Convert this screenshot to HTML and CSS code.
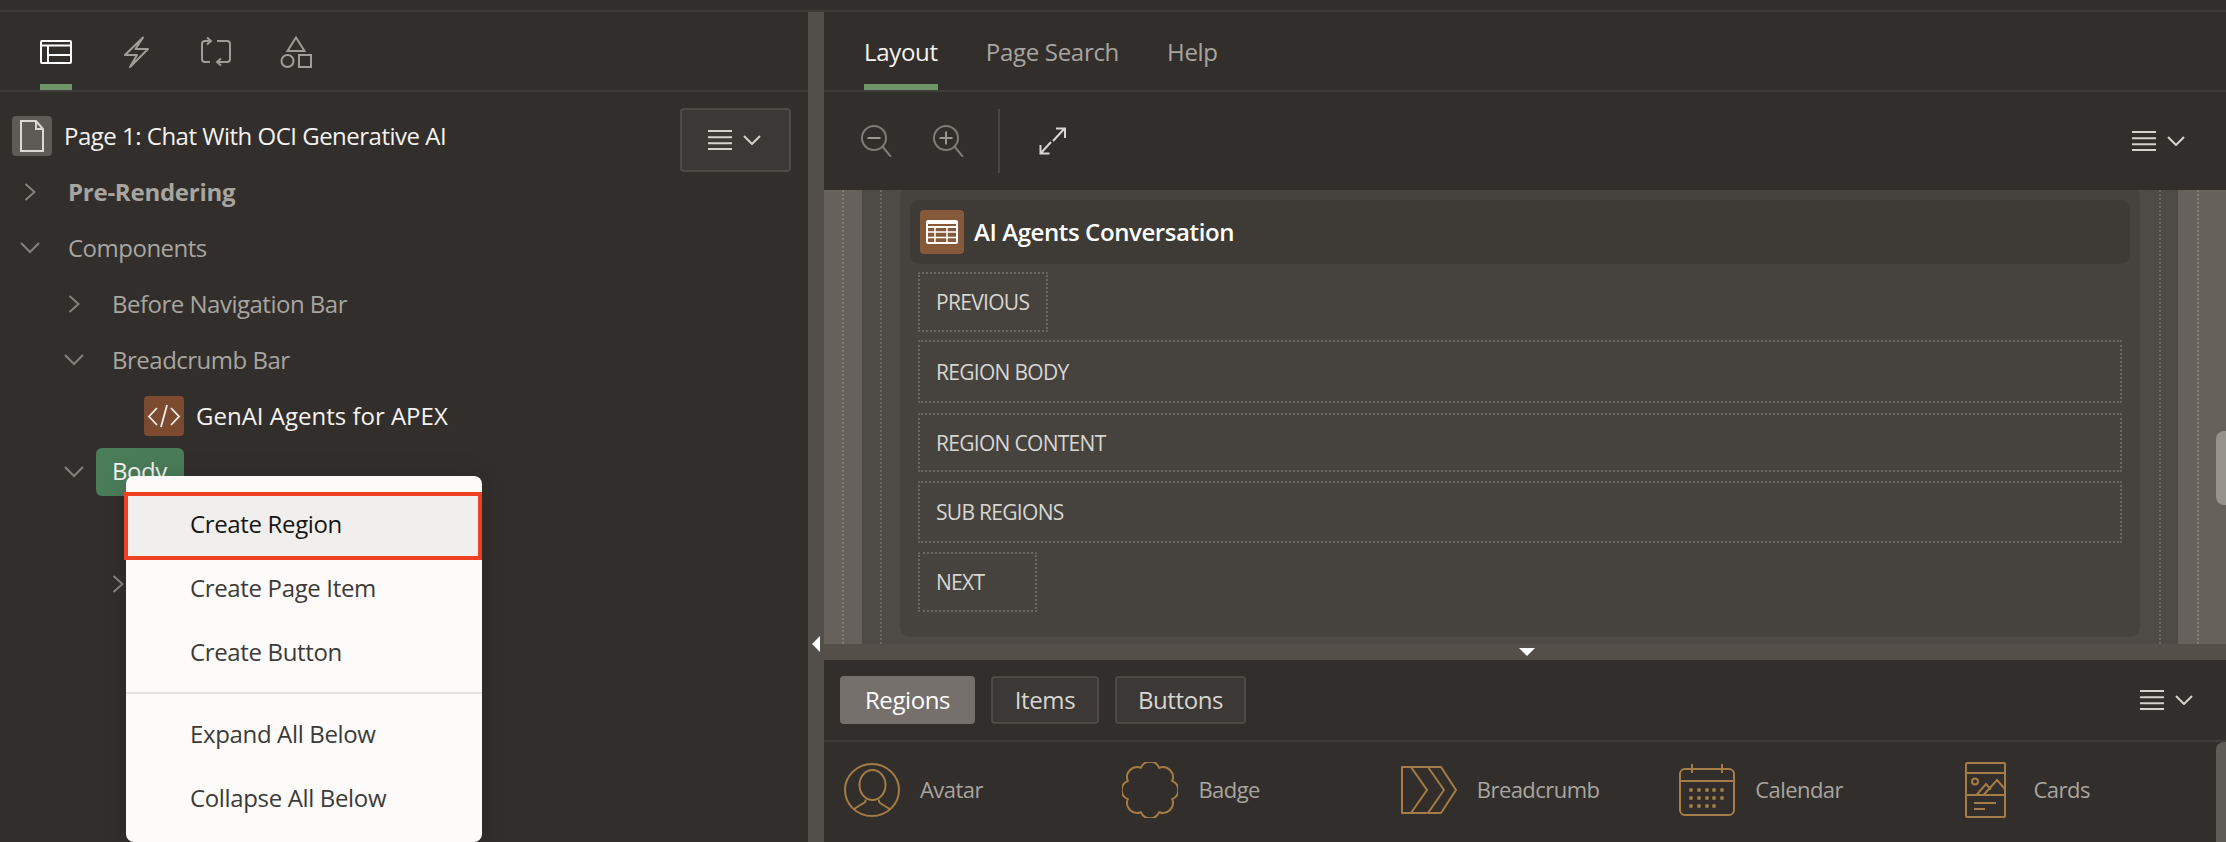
FILE: index.html
```html
<!DOCTYPE html>
<html lang="en">

<head>
    <meta charset="UTF-8">
    <meta name="viewport" content="width=device-width, initial-scale=1.0">
    <title>Page Designer</title>
    <link rel="stylesheet" href="styles.css">
</head>

<body>
    <svg class="sprites" aria-hidden="true">
        <symbol id="i-menu" viewBox="0 0 24 20">
            <path d="M0 1h24M0 7.300h24M0 13.300h24M0 19h24" fill="none" stroke="currentColor" stroke-width="2" />
        </symbol>
        <symbol id="i-caret" viewBox="0 0 18 10">
            <path d="M1 1l8 8 8-8" fill="none" stroke="currentColor" stroke-width="2" />
        </symbol>
        <symbol id="i-right" viewBox="0 0 12 18">
            <path d="M1.500 1l9 8-9 8" fill="none" stroke="currentColor" stroke-width="2" />
        </symbol>
        <symbol id="i-down" viewBox="0 0 20 12">
            <path d="M1 1l9 9 9-9" fill="none" stroke="currentColor" stroke-width="2" />
        </symbol>
    </svg>

    <div class="app">
        <div class="topbar"></div>
        <div class="main">
            <!-- left side: page tree -->
            <section class="tree-panel">
                <div class="icon-tabs">
                    <div class="icon-tab active">
                        <svg width="32" height="24" viewBox="0 0 32 24" fill="none" stroke="currentColor" stroke-width="2">
                            <rect x="1" y="1" width="30" height="22" rx="1" />
                            <path d="M1 5.500h30M8 5.500V23M8 15h23" />
                        </svg>
                    </div>
                    <div class="icon-tab">
                        <svg width="32" height="32" viewBox="0 0 32 32" fill="none" stroke="currentColor" stroke-width="2" stroke-linejoin="round">
                            <path d="M23 1.500L5 19h12l-7 12 18-18H15.500z" />
                        </svg>
                    </div>
                    <div class="icon-tab">
                        <svg width="32" height="32" viewBox="0 0 32 32" fill="none" stroke="currentColor" stroke-width="2">
                            <path d="M11 5H5a3 3 0 0 0-3 3v15a3 3 0 0 0 3 3h5M7 1.500L11 5 7 8.500" />
                            <path d="M17 5h10a3 3 0 0 1 3 3v15a3 3 0 0 1-3 3H17M21 22.500L17 26l4 3.500" />
                        </svg>
                    </div>
                    <div class="icon-tab">
                        <svg width="32" height="32" viewBox="0 0 32 32" fill="none" stroke="currentColor" stroke-width="2">
                            <path d="M16 1.500L24.500 15h-17z" />
                            <circle cx="7.500" cy="25" r="6" />
                            <rect x="19" y="19" width="12" height="12" />
                        </svg>
                    </div>
                </div>

                <div class="tree">
                    <div class="tree-head">
                        <span class="page-icon">
                            <svg width="40" height="40" viewBox="0 0 40 40" fill="none" stroke="#dcd9d4" stroke-width="2">
                                <path d="M9 5h15l7 8v22H9zM24 5v8h7" />
                            </svg>
                        </span>
                        <span class="tree-title">Page 1: Chat With OCI Generative AI</span>
                        <button class="menu-btn">
                            <svg class="i-menu"><use href="#i-menu" /></svg>
                            <svg class="i-caret"><use href="#i-caret" /></svg>
                        </button>
                    </div>

                    <div class="row">
                        <span class="toggle"><svg class="i-right"><use href="#i-right" /></svg></span>
                        <span class="label bold">Pre-Rendering</span>
                    </div>
                    <div class="row">
                        <span class="toggle"><svg class="i-down"><use href="#i-down" /></svg></span>
                        <span class="label">Components</span>
                    </div>
                    <div class="row lvl-1">
                        <span class="toggle"><svg class="i-right"><use href="#i-right" /></svg></span>
                        <span class="label">Before Navigation Bar</span>
                    </div>
                    <div class="row lvl-1">
                        <span class="toggle"><svg class="i-down"><use href="#i-down" /></svg></span>
                        <span class="label">Breadcrumb Bar</span>
                    </div>
                    <div class="row leaf">
                        <span class="code-icon">
                            <svg width="40" height="40" viewBox="0 0 40 40" fill="none" stroke="#f2efeb" stroke-width="1.800">
                                <path d="M13 12l-8 8.500 8 8.500M17 31l6-22M27 12l8 8.500-8 8.500" />
                            </svg>
                        </span>
                        <span class="label white">GenAI Agents for APEX</span>
                    </div>
                    <div class="row lvl-1">
                        <span class="toggle"><svg class="i-down"><use href="#i-down" /></svg></span>
                        <span class="label pill">Body</span>
                    </div>
                    <div class="row"></div>
                    <div class="row lvl-2">
                        <span class="toggle"><svg class="i-right"><use href="#i-right" /></svg></span>
                    </div>
                </div>

                <ul class="context-menu">
                    <li class="picked">Create Region</li>
                    <li>Create Page Item</li>
                    <li>Create Button</li>
                    <li class="sep"></li>
                    <li>Expand All Below</li>
                    <li>Collapse All Below</li>
                </ul>
            </section>

            <div class="splitter-v"><span class="arrow-left"></span></div>

            <!-- right side: layout + gallery -->
            <section class="design-panel">
                <nav class="text-tabs">
                    <a class="text-tab active">Layout</a>
                    <a class="text-tab">Page Search</a>
                    <a class="text-tab">Help</a>
                </nav>

                <div class="toolbar">
                    <svg class="zoom-btn" width="32" height="32" viewBox="0 0 32 32" fill="none" stroke="currentColor" stroke-width="2">
                        <circle cx="14" cy="13" r="12" />
                        <path d="M22.500 21.500L31 32" />
                        <path d="M7.500 13h13" stroke="#9a9691" />
                    </svg>
                    <svg class="zoom-btn" width="32" height="32" viewBox="0 0 32 32" fill="none" stroke="currentColor" stroke-width="2">
                        <circle cx="14" cy="13" r="12" />
                        <path d="M22.500 21.500L31 32" />
                        <path d="M7.500 13h13M14 6.500v13" stroke="#9a9691" />
                    </svg>
                    <span class="tool-sep"></span>
                    <svg class="expand-btn" width="27" height="28" viewBox="0 0 27 28" fill="none" stroke="currentColor" stroke-width="2">
                        <path d="M14 14L26 1M17 1.500H26V11M12 15L1 27M1.500 18V26.500H10.500" />
                    </svg>
                    <div class="menu-icon">
                        <svg class="i-menu"><use href="#i-menu" /></svg>
                        <svg class="i-caret"><use href="#i-caret" /></svg>
                    </div>
                </div>

                <div class="canvas">
                    <div class="gutter outer"><span class="dots"></span></div>
                    <div class="gutter inner"><span class="dots"></span></div>
                    <div class="region">
                        <div class="region-head">
                            <span class="table-icon">
                                <svg width="32" height="24" viewBox="0 0 32 24" fill="none" stroke="#fff" stroke-width="2">
                                    <rect x="1" y="1" width="30" height="22" rx="1" />
                                    <path d="M1 3h30M1 7h30" stroke-width="2" />
                                    <path d="M1 12h30M1 17.500h30M9 7v16M21 7v16" stroke-width="1.500" />
                                </svg>
                            </span>
                            <span class="region-title">AI Agents Conversation</span>
                        </div>
                        <div class="slot slot-previous">PREVIOUS</div>
                        <div class="slot slot-body">REGION BODY</div>
                        <div class="slot slot-content">REGION CONTENT</div>
                        <div class="slot slot-sub">SUB REGIONS</div>
                        <div class="slot slot-next">NEXT</div>
                    </div>
                    <div class="gutter inner right"><span class="dots"></span></div>
                    <div class="gutter outer right"><span class="dots"></span></div>
                    <span class="thumb"></span>
                </div>

                <div class="splitter-h"><span class="arrow-down"></span></div>

                <div class="gallery-bar">
                    <button class="pick active">Regions</button>
                    <button class="pick">Items</button>
                    <button class="pick">Buttons</button>
                    <div class="menu-icon">
                        <svg class="i-menu"><use href="#i-menu" /></svg>
                        <svg class="i-caret"><use href="#i-caret" /></svg>
                    </div>
                </div>

                <div class="gallery">
                    <div class="gallery-item">
                        <span class="g-icon">
                            <svg width="56" height="54" viewBox="0 0 56 54" fill="none" stroke="currentColor" stroke-width="2">
                                <ellipse cx="28" cy="27" rx="27" ry="26" />
                                <ellipse cx="28.500" cy="22" rx="13" ry="15" />
                                <path d="M10 46l10.500-6.500q1.500-1 1-3M46.500 46.500L36 40q-1.500-1-1-3.500" />
                            </svg>
                        </span>
                        <span class="g-label">Avatar</span>
                    </div>
                    <div class="gallery-item">
                        <span class="g-icon">
                            <svg width="56" height="56" viewBox="0 0 56 56" fill="none" stroke="currentColor" stroke-width="2">
                                <path d="M18.800 5.800A10 10 0 0 1 37.200 5.800A10 10 0 0 1 50.200 18.800A10 10 0 0 1 50.200 37.200A10 10 0 0 1 37.200 50.200A10 10 0 0 1 18.800 50.200A10 10 0 0 1 5.800 37.200A10 10 0 0 1 5.800 18.800A10 10 0 0 1 18.800 5.800Z" />
                            </svg>
                        </span>
                        <span class="g-label">Badge</span>
                    </div>
                    <div class="gallery-item">
                        <span class="g-icon">
                            <svg width="56" height="48" viewBox="0 0 56 48" fill="none" stroke="currentColor" stroke-width="2" stroke-linejoin="round">
                                <path d="M1 1h39l15 23-15 23H1z" />
                                <path d="M10 1l16 23L10 47M27 1l16 23-16 23" />
                            </svg>
                        </span>
                        <span class="g-label">Breadcrumb</span>
                    </div>
                    <div class="gallery-item">
                        <span class="g-icon">
                            <svg width="56" height="52" viewBox="0 0 56 52" fill="none" stroke="currentColor" stroke-width="2">
                                <rect x="1" y="5" width="54" height="46" rx="5" />
                                <path d="M1 17h54M13 0v9M43 0v9" />
                                <g fill="currentColor" stroke="none">
                                    <circle cx="12" cy="26" r="2" /><circle cx="20" cy="26" r="2" /><circle cx="28" cy="26" r="2" /><circle cx="35" cy="26" r="2" /><circle cx="43" cy="26" r="2" />
                                    <circle cx="12" cy="34" r="2" /><circle cx="20" cy="34" r="2" /><circle cx="28" cy="34" r="2" /><circle cx="35" cy="34" r="2" /><circle cx="43" cy="34" r="2" />
                                    <circle cx="12" cy="42" r="2" /><circle cx="20" cy="42" r="2" /><circle cx="28" cy="42" r="2" /><circle cx="35" cy="42" r="2" />
                                </g>
                            </svg>
                        </span>
                        <span class="g-label">Calendar</span>
                    </div>
                    <div class="gallery-item">
                        <span class="g-icon">
                            <svg width="41" height="56" viewBox="0 0 41 56" fill="none" stroke="currentColor" stroke-width="2">
                                <rect x="1" y="1" width="39" height="54" rx="1" />
                                <path d="M1 11h39M1 33h39M11.500 33l9.500-11 5 5.500M18.500 33l13.500-15 8 9M9 41h22M9 47h11" />
                                <circle cx="10" cy="19.500" r="3" />
                            </svg>
                        </span>
                        <span class="g-label">Cards</span>
                    </div>
                    <span class="gallery-thumb"></span>
                </div>
            </section>
        </div>
    </div>
</body>

</html>
```

FILE: styles.css
```css
/* Basic page setup */
* {
    box-sizing: border-box;
}

html,
body {
    margin: 0;
    height: 100%;
    overflow: hidden;
    background-color: #322e2b;
}

body {
    font-family: "Open Sans", "Noto Sans", sans-serif;
    font-size: 24px;
    letter-spacing: -0.5px;
    color: #a8a5a0;
}

svg {
    display: block;
}

.sprites {
    display: none;
}

.i-menu {
    width: 24px;
    height: 20px;
}

.i-caret {
    width: 18px;
    height: 10px;
}

.i-right {
    width: 12px;
    height: 18px;
}

.i-down {
    width: 20px;
    height: 12px;
}

.app {
    display: flex;
    flex-direction: column;
    height: 842px;
}

.topbar {
    height: 12px;
    flex: none;
    border-bottom: 2px solid #403c39;
}

.main {
    flex: 1;
    display: flex;
    min-height: 0;
}

/* Left panel */
.tree-panel {
    width: 808px;
    flex: none;
    position: relative;
    overflow: hidden;
}

.icon-tabs {
    display: flex;
    gap: 48px;
    height: 80px;
    padding-left: 40px;
    border-bottom: 2px solid #403c39;
    color: #a09d98;
}

.icon-tab {
    width: 32px;
    height: 78px;
    padding-top: 8px;
    display: flex;
    align-items: center;
    justify-content: center;
    border-bottom: 6px solid transparent;
}

.icon-tab.active {
    color: #fff;
    border-bottom-color: #6f9468;
}

.tree {
    padding-top: 16px;
}

.tree-head {
    display: flex;
    align-items: center;
    height: 56px;
    padding-left: 12px;
    color: #fff;
}

.page-icon {
    width: 40px;
    height: 40px;
    margin-right: 12px;
    border-radius: 4px;
    background-color: #5e5a55;
}

.tree-title {
    padding-bottom: 2px;
    color: #f4f2ef;
}

.menu-btn {
    width: 111px;
    height: 64px;
    margin-left: auto;
    margin-right: 17px;
    margin-top: 8px;
    display: flex;
    align-items: center;
    justify-content: center;
    gap: 11px;
    padding: 0 2px 0 0;
    color: #d5d2cd;
    background-color: #3b3835;
    border: 2px solid #4d4a46;
    border-radius: 4px;
}

.row {
    display: flex;
    align-items: center;
    height: 56px;
}

.lvl-1 {
    padding-left: 44px;
}

.lvl-2 {
    padding-left: 88px;
}

.leaf {
    padding-left: 144px;
    gap: 12px;
}

.toggle {
    width: 68px;
    flex: none;
    display: flex;
    justify-content: center;
    padding-right: 8px;
    color: #85817c;
}

.label {
    padding-bottom: 2px;
    color: #a8a5a0;
}

.label.bold {
    font-weight: 700;
    letter-spacing: -0.25px;
}

.label.white {
    letter-spacing: 0;
    color: #f4f2ef;
}

.label.pill {
    margin-left: -16px;
    padding: 0 17px 0 16px;
    height: 48px;
    line-height: 46px;
    border-radius: 6px;
    color: #f4f2ef;
    background-color: #4a7c59;
}

.code-icon {
    width: 40px;
    height: 40px;
    border-radius: 4px;
    background-color: #7b4a2f;
}

/* Context menu */
.context-menu {
    position: absolute;
    left: 126px;
    top: 464px;
    width: 356px;
    margin: 0;
    padding: 16px 0 8px;
    list-style: none;
    border-radius: 8px;
    letter-spacing: -0.35px;
    color: #3d3a37;
    background-color: #fcfbf9;
    box-shadow: 0 0 24px rgba(0, 0, 0, 0.15);
}

.context-menu li {
    height: 64px;
    padding-left: 64px;
    line-height: 56px;
}

.context-menu li.picked {
    height: 68px;
    margin-left: -2px;
    padding-left: 62px;
    color: #161513;
    background-color: #f0efed;
    border: 4px solid #ee4023;
}

.context-menu li.sep {
    height: 2px;
    margin: 4px 0 12px;
    padding: 0;
    background-color: #e4e2df;
}

/* Splitters */
.splitter-v {
    width: 16px;
    flex: none;
    position: relative;
    background-color: #524e49;
}

.arrow-left {
    position: absolute;
    left: 4px;
    top: 624px;
    border-style: solid;
    border-width: 8px 8px 8px 0;
    border-color: transparent #fff transparent transparent;
}

.splitter-h {
    height: 16px;
    flex: none;
    position: relative;
    background-color: #554f4a;
}

.arrow-down {
    position: absolute;
    left: 695px;
    top: 4px;
    border-style: solid;
    border-width: 8px 8px 0 8px;
    border-color: #fff transparent transparent transparent;
}

/* Right panel */
.design-panel {
    flex: 1;
    min-width: 0;
    display: flex;
    flex-direction: column;
}

.text-tabs {
    display: flex;
    gap: 48px;
    height: 80px;
    flex: none;
    padding-left: 40px;
    letter-spacing: -0.3px;
    border-bottom: 2px solid #403c39;
}

.text-tab {
    height: 78px;
    line-height: 80px;
    border-bottom: 6px solid transparent;
}

.text-tab.active {
    color: #f7f5f2;
    border-bottom-color: #6f9468;
}

.toolbar {
    display: flex;
    align-items: center;
    height: 98px;
    flex: none;
    padding-left: 36px;
    padding-right: 41px;
}

.zoom-btn {
    margin-right: 40px;
    color: #7f7b76;
}

.tool-sep {
    width: 2px;
    height: 64px;
    margin-left: -6px;
    margin-right: 39px;
    background-color: #4a4642;
}

.expand-btn {
    color: #d8d6d2;
}

.menu-icon {
    margin-left: auto;
    display: flex;
    align-items: center;
    gap: 11px;
    color: #d5d2cd;
}

/* Canvas */
.canvas {
    height: 454px;
    flex: none;
    display: flex;
    position: relative;
    overflow: hidden;
    background-color: #4e4a46;
}

.gutter {
    width: 38px;
    flex: none;
    padding-left: 18px;
}

.gutter.outer {
    background-color: #66615b;
}

.gutter.right {
    padding-left: 19px;
}

.gutter.outer.right {
    width: 48px;
}

.dots {
    display: block;
    height: 100%;
    border-left: 2px dotted #817d77;
}

.gutter.inner .dots {
    border-left-color: #6b6761;
}

.region {
    flex: 1;
    height: 447px;
    padding: 10px 10px 0;
    border-radius: 6px 6px 10px 10px;
    background-color: #46433e;
}

.region-head {
    display: flex;
    align-items: center;
    height: 64px;
    padding-left: 10px;
    border-radius: 10px;
    background-color: #3e3b36;
}

.table-icon {
    width: 44px;
    height: 44px;
    display: flex;
    align-items: center;
    justify-content: center;
    margin-right: 10px;
    border-radius: 4px;
    background-color: #85593a;
}

.region-title {
    padding-bottom: 2px;
    font-weight: 600;
    letter-spacing: -0.4px;
    color: #fff;
}

.slot {
    display: flex;
    align-items: center;
    margin-left: 8px;
    margin-right: 8px;
    padding-left: 16px;
    font-size: 21px;
    letter-spacing: -0.7px;
    color: #d8d6d2;
    border: 2px dotted #6b6761;
    border-radius: 2px;
}

.slot-previous {
    width: 130px;
    height: 60px;
    margin-top: 8px;
}

.slot-body {
    height: 63px;
    margin-top: 8px;
}

.slot-content {
    height: 59px;
    margin-top: 10px;
}

.slot-sub {
    height: 62px;
    margin-top: 9px;
}

.slot-next {
    width: 119px;
    height: 60px;
    margin-top: 9px;
}

.thumb {
    position: absolute;
    right: 0;
    top: 241px;
    width: 10px;
    height: 74px;
    border-radius: 8px 0 0 8px;
    background-color: #96928c;
}

/* Gallery */
.gallery-bar {
    display: flex;
    align-items: center;
    gap: 16px;
    height: 82px;
    flex: none;
    padding-left: 16px;
    padding-right: 33px;
    border-bottom: 2px solid #403c39;
}

.pick {
    width: 108px;
    height: 48px;
    padding: 0 0 2px;
    font-family: inherit;
    font-size: 24px;
    letter-spacing: -0.4px;
    color: #d8d6d2;
    background-color: #3b3835;
    border: 2px solid #4d4a46;
    border-radius: 4px;
}

.pick.active {
    width: 135px;
    color: #fff;
    background-color: #75706b;
    border-color: #75706b;
}

.pick:nth-child(3) {
    width: 131px;
}

.gallery {
    flex: 1;
    display: grid;
    grid-template-columns: repeat(5, 278.4px);
    padding-left: 20px;
    position: relative;
}

.gallery-item {
    display: flex;
    align-items: center;
    gap: 20px;
    height: 96px;
    font-size: 22px;
    letter-spacing: -0.55px;
}

.g-label {
    padding-bottom: 2px;
}

.g-icon {
    width: 56px;
    flex: none;
    display: flex;
    justify-content: center;
    color: #a57c45;
}

.gallery-thumb {
    position: absolute;
    right: 0;
    top: 0;
    bottom: 0;
    width: 10px;
    border-radius: 8px 0 0 0;
    background-color: #5f5b56;
}
```
